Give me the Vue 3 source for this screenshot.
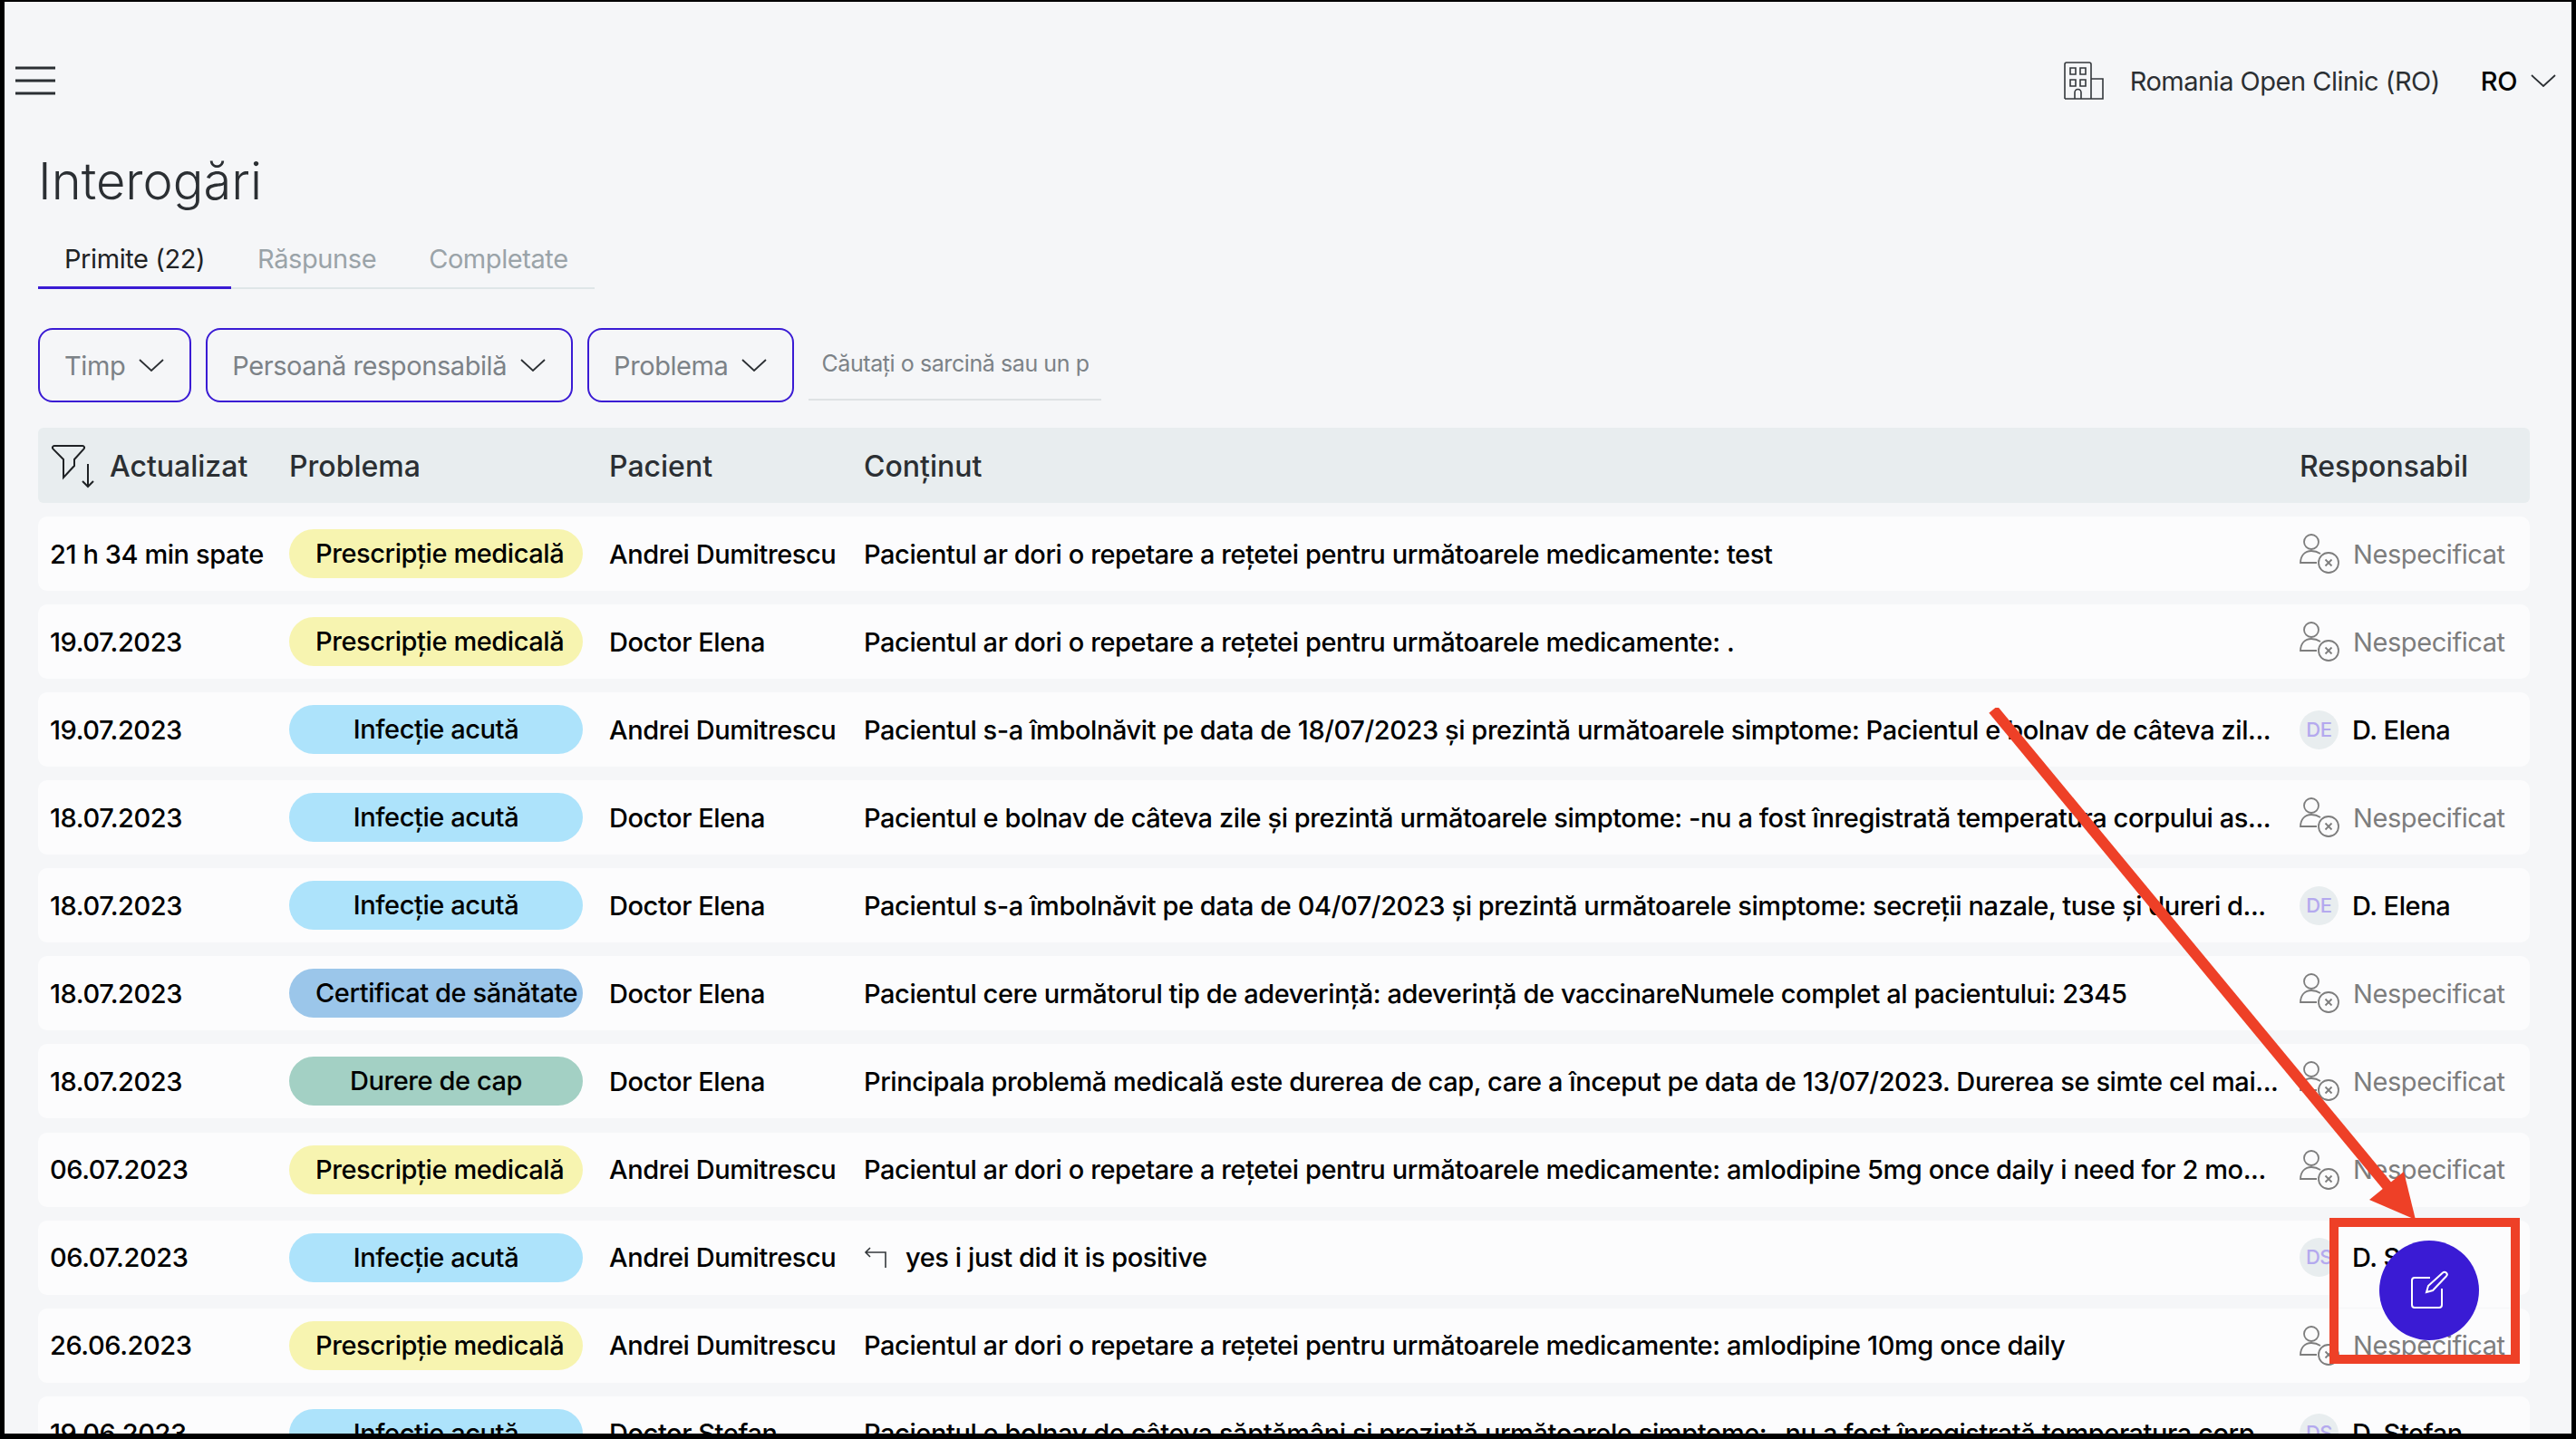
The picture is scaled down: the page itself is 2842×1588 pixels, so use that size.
<script setup>
const columns = ["Problema", "Pacient", "Conținut"];

const rows = [
  { time: "21 h 34 min spate", tag: "Prescripție medicală", color: "yellow", patient: "Andrei Dumitrescu", text: "Pacientul ar dori o repetare a rețetei pentru următoarele medicamente: test" },
  { time: "19.07.2023", tag: "Prescripție medicală", color: "yellow", patient: "Doctor Elena", text: "Pacientul ar dori o repetare a rețetei pentru următoarele medicamente: ." },
  { time: "19.07.2023", tag: "Infecție acută", color: "sky", patient: "Andrei Dumitrescu", text: "Pacientul s-a îmbolnăvit pe data de 18/07/2023 și prezintă următoarele simptome: Pacientul e bolnav de câteva zil...", initials: "DE", owner: "D. Elena" },
  { time: "18.07.2023", tag: "Infecție acută", color: "sky", patient: "Doctor Elena", text: "Pacientul e bolnav de câteva zile și prezintă următoarele simptome: -nu a fost înregistrată temperatura corpului as..." },
  { time: "18.07.2023", tag: "Infecție acută", color: "sky", patient: "Doctor Elena", text: "Pacientul s-a îmbolnăvit pe data de 04/07/2023 și prezintă următoarele simptome: secreții nazale, tuse și dureri d...", initials: "DE", owner: "D. Elena" },
  { time: "18.07.2023", tag: "Certificat de sănătate", color: "blue", patient: "Doctor Elena", text: "Pacientul cere următorul tip de adeverință: adeverință de vaccinareNumele complet al pacientului: 2345" },
  { time: "18.07.2023", tag: "Durere de cap", color: "green", patient: "Doctor Elena", text: "Principala problemă medicală este durerea de cap, care a început pe data de 13/07/2023. Durerea se simte cel mai..." },
  { time: "06.07.2023", tag: "Prescripție medicală", color: "yellow", patient: "Andrei Dumitrescu", text: "Pacientul ar dori o repetare a rețetei pentru următoarele medicamente: amlodipine 5mg once daily i need for 2 mo..." },
  { time: "06.07.2023", tag: "Infecție acută", color: "sky", patient: "Andrei Dumitrescu", text: "yes i just did it is positive", reply: true, initials: "DS", owner: "D. Stefan" },
  { time: "26.06.2023", tag: "Prescripție medicală", color: "yellow", patient: "Andrei Dumitrescu", text: "Pacientul ar dori o repetare a rețetei pentru următoarele medicamente: amlodipine 10mg once daily" },
  { time: "19.06.2023", tag: "Infecție acută", color: "sky", patient: "Doctor Stefan", text: "Pacientul e bolnav de câteva săptămâni și prezintă următoarele simptome: -nu a fost înregistrată temperatura corp...", initials: "DS", owner: "D. Stefan" },
];
</script>

<template>
  <div class="frame">
    <header class="topbar">
      <svg class="burger" width="44" height="32" viewBox="0 0 44 32">
        <path d="M0 2 H44 M0 16 H44 M0 30 H44" stroke="#2b2f33" stroke-width="3" />
      </svg>
      <div class="topbar-right">
        <svg class="building" width="44" height="42" viewBox="0 0 44 42" fill="none" stroke="#33373b" stroke-width="1.6">
          <path d="M1 41 V3 a2 2 0 0 1 2 -2 H28 a2 2 0 0 1 2 2 V41 M1 41 H43 V19 H30" />
          <path d="M7 7 h6 v7 h-6 z M18 7 h6 v7 h-6 z M7 20 h6 v7 h-6 z M18 20 h6 v7 h-6 z" />
          <path d="M12 41 V34 a3.5 3.5 0 0 1 7 0 V41" />
        </svg>
        <span class="clinic">Romania Open Clinic (RO)</span>
        <span class="lang">RO</span>
        <svg class="chevron" width="28" height="14" viewBox="0 0 28 14">
          <path d="M1 1 L14 13 L27 1" fill="none" stroke="#2b2f33" stroke-width="1.8" />
        </svg>
      </div>
    </header>

    <main class="content">
      <h1 class="title">Interogări</h1>

      <nav class="tabs">
        <span class="tab active">Primite (22)</span>
        <span class="tab">Răspunse</span>
        <span class="tab">Completate</span>
      </nav>

      <div class="filters">
        <button class="filter">
          <span>Timp</span>
          <svg width="28" height="14" viewBox="0 0 28 14"><path d="M1 1 L14 13 L27 1" fill="none" stroke="#2b2f33" stroke-width="1.8" /></svg>
        </button>
        <button class="filter">
          <span>Persoană responsabilă</span>
          <svg width="28" height="14" viewBox="0 0 28 14"><path d="M1 1 L14 13 L27 1" fill="none" stroke="#2b2f33" stroke-width="1.8" /></svg>
        </button>
        <button class="filter">
          <span>Problema</span>
          <svg width="28" height="14" viewBox="0 0 28 14"><path d="M1 1 L14 13 L27 1" fill="none" stroke="#2b2f33" stroke-width="1.8" /></svg>
        </button>
        <input class="search" placeholder="Căutați o sarcină sau un pacient" />
      </div>

      <div class="row head">
        <div class="sort">
          <svg width="50" height="50" viewBox="0 0 50 50" fill="none" stroke="#1f2225" stroke-width="2">
            <path d="M4 2 H35 a2 2 0 0 1 1.5 3.4 L26 17 V24 L14 37 V17 L2.5 5.4 A2 2 0 0 1 4 2 Z" />
            <path d="M41 22 V47 M35 41 L41 47 L47 41" />
          </svg>
          <span>Actualizat</span>
        </div>
        <div v-for="col in columns" :key="col">{{ col }}</div>
        <div>Responsabil</div>
      </div>

      <div v-for="(row, i) in rows" :key="i" class="row item">
        <div>{{ row.time }}</div>
        <div><span class="pill" :class="row.color">{{ row.tag }}</span></div>
        <div>{{ row.patient }}</div>
        <div class="body">
          <svg v-if="row.reply" class="reply" width="26" height="24" viewBox="0 0 26 24" fill="none" stroke="#33373b" stroke-width="1.6">
            <path d="M7 1 L2 6 L7 11 M2 6 H24 V23" />
          </svg>
          <span>{{ row.text }}</span>
        </div>
        <div class="owner">
          <template v-if="row.owner">
            <span class="avatar">{{ row.initials }}</span>
            <span>{{ row.owner }}</span>
          </template>
          <template v-else>
            <svg width="44" height="44" viewBox="0 0 44 44" fill="none" stroke="#7d7d7d" stroke-width="1.8">
              <circle cx="13" cy="9" r="8" />
              <path d="M19 32 H1 C1 24 6 19 13 19 C17 19 20 20 23 22" />
              <circle cx="32" cy="32" r="11" />
              <path d="M28.5 28.5 L35.5 35.5 M35.5 28.5 L28.5 35.5" />
            </svg>
            <span class="unset">Nespecificat</span>
          </template>
        </div>
      </div>
    </main>

    <!-- annotation drawn over the screenshot -->
    <svg class="arrow" width="500" height="600" viewBox="0 0 500 600">
      <path d="M8 2 L443 528" fill="none" stroke="#ee4027" stroke-width="12" />
      <path d="M423 543 L461 512 L474 565 Z" fill="#ee4027" />
    </svg>
    <div class="callout">
      <span class="callout-gap"></span>
    </div>
    <button class="fab">
      <svg width="46" height="44" viewBox="0 0 46 44" fill="none" stroke="#fff" stroke-width="2">
        <path d="M24 8 H7 a3 3 0 0 0 -3 3 V38 a3 3 0 0 0 3 3 H34 a3 3 0 0 0 3 -3 V20" />
        <path d="M20 24 L22 17 L38 2.6 a2.6 2.6 0 0 1 4 3.6 L27 22 Z" />
      </svg>
    </button>
  </div>
</template>

<style scoped>
.frame {
  position: relative;
  box-sizing: border-box;
  height: 1588px;
  overflow: hidden;
  border: solid #000;
  border-width: 2px 5px 6px 5px;
  background: #f5f6f8;
  color: #000;
  font-family: Inter, "Noto Sans", sans-serif;
  font-size: 29px;
  letter-spacing: -0.42px;
}

.topbar {
  height: 174px;
  padding: 0 17px 0 12px;
  display: flex;
  align-items: center;
  justify-content: space-between;
}

.topbar-right {
  display: flex;
  align-items: center;
}

.clinic {
  margin-left: 29px;
  color: #2b2f33;
  letter-spacing: -0.5px;
}

.lang {
  margin-left: 45px;
  font-weight: 500;
}

.chevron {
  margin-left: 15px;
}

.content {
  padding: 0 46px 0 37px;
}

.title {
  margin: -8px 0 0;
  height: 64px;
  line-height: 64px;
  font-size: 56px;
  font-weight: 300;
  letter-spacing: 0;
  color: #2b2f33;
}

.tabs {
  width: 614px;
  height: 65px;
  margin-top: 22px;
  box-sizing: border-box;
  display: flex;
  border-bottom: 2px solid #dfe6e8;
  white-space: nowrap;
}

.tab {
  height: 65px;
  padding: 0 29px;
  box-sizing: border-box;
  line-height: 64px;
  color: #9aa3a8;
}

.tab.active {
  color: #1f2225;
  border-bottom: 3px solid #3a1bd4;
}

.filters {
  margin-top: 43px;
  display: flex;
  gap: 16px;
}

.filter {
  height: 82px;
  padding: 0 28px 0 27px;
  display: flex;
  align-items: center;
  gap: 15px;
  background: none;
  border: 2px solid #3a1bd4;
  border-radius: 16px;
  color: #7c8287;
  font: inherit;
  letter-spacing: inherit;
}

.search {
  width: 323px;
  height: 80px;
  box-sizing: border-box;
  padding: 0 14px;
  background: none;
  border: none;
  border-bottom: 2px solid #dfe2e4;
  outline: none;
  font: inherit;
  font-size: 25px;
  letter-spacing: inherit;
}

.search::placeholder {
  color: #7c8287;
  opacity: 1;
}

.row {
  display: grid;
  grid-template-columns: 264px 353px 281px 1584px 1fr;
  align-items: center;
  padding-left: 13px;
  white-space: nowrap;
}

.head {
  box-sizing: border-box;
  height: 83px;
  margin-top: 28px;
  padding-top: 2px;
  background: #e8edef;
  border-radius: 6px;
  font-size: 32px;
  font-weight: 500;
  letter-spacing: 0;
  color: #2b2f33;
}

.sort {
  display: flex;
  align-items: center;
  gap: 15px;
}

.sort svg {
  margin-left: 1px;
}

.item {
  height: 82px;
  margin-top: 15.07px;
  background: #fcfcfd;
  border-radius: 10px;
  font-weight: 500;
}

.pill {
  display: block;
  box-sizing: border-box;
  width: 324px;
  height: 54px;
  padding: 0 29px;
  line-height: 54px;
  border-radius: 27px;
  text-align: center;
}

.yellow { background: #f7f4b0; }
.sky { background: #ade3fb; }
.blue { background: #9bc6ea; }
.green { background: #a3d0c4; }

.body {
  display: flex;
  align-items: center;
  gap: 20px;
  overflow: hidden;
}

.owner {
  display: flex;
  align-items: center;
  gap: 15px;
}

.avatar {
  width: 43px;
  height: 43px;
  border-radius: 50%;
  background: #e8edef;
  color: #b4a9ee;
  font-size: 22px;
  line-height: 43px;
  text-align: center;
}

.unset {
  color: #7d7d7d;
  font-weight: 400;
}

.arrow {
  position: absolute;
  left: 2186px;
  top: 779px;
}

.callout {
  position: absolute;
  left: 2565px;
  top: 1342px;
  width: 210px;
  height: 161px;
  box-sizing: border-box;
  border: 10px solid #ee4027;
}

.callout-gap {
  position: absolute;
  left: 0;
  right: 0;
  top: 73px;
  height: 16px;
  background: #fcfcfd;
}

.fab {
  position: absolute;
  left: 2620px;
  top: 1367px;
  width: 110px;
  height: 110px;
  padding: 0;
  display: flex;
  align-items: center;
  justify-content: center;
  background: #3a1bd4;
  border: none;
  border-radius: 50%;
}
</style>
